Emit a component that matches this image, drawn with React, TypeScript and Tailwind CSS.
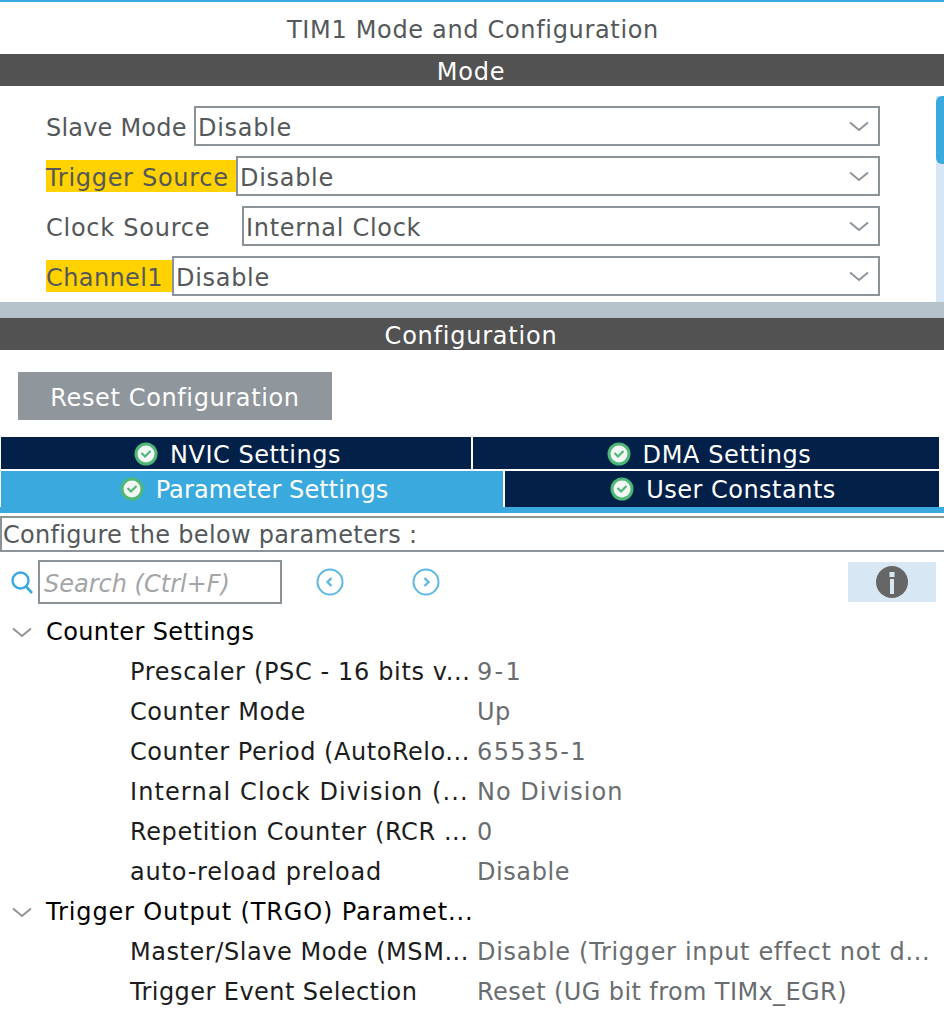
import { ReactNode } from 'react';

const font = "font-['DejaVu_Sans',sans-serif]";

interface ModeRowProps {
  label: string;
  value: string;
  /** Label column width, the select starts right after it */
  labelClass: string;
  trackClass: string;
  warn?: boolean;
}

function CheckBadge() {
  return (
    <svg width="24" height="24" viewBox="0 0 24 24" className="shrink-0">
      <circle cx="12" cy="12" r="11.5" fill="#4fb878" />
      <circle cx="12" cy="12" r="8.5" fill="#f2f7f3" />
      <path d="M7.5 11 L11 14.5 L16.5 9" fill="none" stroke="#4fb878" strokeWidth="2.2" />
    </svg>
  );
}

function Chevron({ color = '#8e9498' }: { color?: string }) {
  return (
    <svg width="20" height="11" viewBox="0 0 20 11" className="shrink-0">
      <path d="M1 1.5 L10 9 L19 1.5" fill="none" stroke={color} strokeWidth="2" />
    </svg>
  );
}

function ModeRow({ label, value, labelClass, trackClass, warn }: ModeRowProps) {
  return (
    <div className="flex h-10 items-center">
      <div className={`${labelClass} shrink-0`}>
        <span className={`flex h-8 items-center whitespace-nowrap pt-[4px] text-[#55585a] ${trackClass} ${warn ? 'bg-[#ffd200]' : ''}`}>
          {label}
        </span>
      </div>
      <div className="flex h-10 flex-1 items-center justify-between border-2 border-[#8b9399] pl-[2px] pr-[9px] text-[#55585a]">
        <span className="pt-[4px] tracking-[0.7px]">{value}</span>
        <Chevron />
      </div>
    </div>
  );
}

function SectionBar({ children }: { children: ReactNode }) {
  return (
    <div className="flex h-8 items-center justify-center bg-[#515251] pr-[2px] pt-[4px] tracking-[0.77px] text-white">{children}</div>
  );
}

function Tab({ label, className, textClass }: { label: string; className: string; textClass: string }) {
  return (
    <div className={`flex items-center justify-center gap-[12px] text-white ${className}`}>
      <CheckBadge />
      <span className={`pt-[2px] ${textClass}`}>{label}</span>
    </div>
  );
}

function GroupHeader({ label, trackClass }: { label: string; trackClass: string }) {
  return (
    <div className="flex h-10 items-center pl-[12px] pt-[2px] text-black">
      <Chevron color="#8e9498" />
      <span className={`ml-[14px] whitespace-nowrap ${trackClass}`}>{label}</span>
    </div>
  );
}

function ParamRow({ name, value, nameClass, valueClass }: { name: string; value: string; nameClass: string; valueClass: string }) {
  return (
    <div className="flex h-10 items-center pl-[130px] pt-[2px]">
      <span className={`w-[347px] shrink-0 whitespace-nowrap text-[#1c1c1c] ${nameClass}`}>{name}</span>
      <span className={`whitespace-nowrap text-[#6a6d70] ${valueClass}`}>{value}</span>
    </div>
  );
}

export default function App() {
  return (
    <div className={`${font} h-[1024px] w-[944px] overflow-hidden bg-white text-[24px] leading-none`}>
      <div className="h-[2px] bg-[#3aaade]" />
      <div className="flex h-[52px] items-center justify-center pl-[2px] pt-[4px] tracking-[0.67px] text-[#55585a]">TIM1 Mode and Configuration</div>
      <SectionBar>Mode</SectionBar>

      {/* Mode selects with the scrollbar on the right */}
      <div className="flex h-[216px] pl-[46px]">
        <div className="flex w-[834px] flex-col gap-[10px] pt-[20px]">
          <ModeRow label="Slave Mode" value="Disable" labelClass="w-[148px]" trackClass="tracking-[0.2px]" />
          <ModeRow label="Trigger Source" value="Disable" labelClass="w-[190px]" trackClass="tracking-[0.7px]" warn />
          <ModeRow label="Clock Source" value="Internal Clock" labelClass="w-[196px]" trackClass="tracking-[0.75px]" />
          <ModeRow label="Channel1" value="Disable" labelClass="w-[126px]" trackClass="tracking-[0.4px]" warn />
        </div>
        <div className="ml-auto mt-[10px] w-[8px] bg-[#d6e6f4]">
          <div className="h-[68px] rounded-tl-[6px] rounded-bl-[6px] bg-[#3aaade]" />
        </div>
      </div>
      <div className="h-4 bg-[#b7c3ca]" />
      <SectionBar>Configuration</SectionBar>

      <div className="px-[18px] pt-[22px]">
        <div className="flex h-12 w-[314px] items-center justify-center bg-[#8f969c] pt-[4px] tracking-[0.63px] text-white">Reset Configuration</div>
      </div>

      {/* Settings tabs */}
      <div className="mt-[17px] flex h-8 gap-[2px] pl-[1px] pr-[5px]">
        <Tab label="NVIC Settings" className="w-[470px] bg-[#032049] pl-[3px] pt-[2px]" textClass="tracking-[0.5px]" />
        <Tab label="DMA Settings" className="flex-1 bg-[#032049] pl-[6px] pt-[2px]" textClass="tracking-[0.6px]" />
      </div>
      <div className="mt-[2px] flex h-9 gap-[2px] pl-[1px] pr-[5px]">
        <Tab label="Parameter Settings" className="w-[502px] bg-[#3aaade] pl-[4px]" textClass="tracking-[0.1px]" />
        <Tab label="User Constants" className="flex-1 bg-[#032049] pl-[2px]" textClass="tracking-[0.5px]" />
      </div>
      <div className="h-[6px] bg-[#3aaade]" />

      <div className="mt-[3px] flex h-9 items-center border-y-2 border-l-2 border-[#8b9399] pl-[1px] pt-[2px] tracking-[0.31px] text-[#55585a]">
        Configure the below parameters :
      </div>

      {/* Search row */}
      <div className="flex h-[59px] items-start pt-[8px]">
        <svg width="24" height="26" viewBox="0 0 24 26" className="ml-[10px] mt-[10px] shrink-0">
          <circle cx="10.5" cy="10.5" r="8" fill="none" stroke="#3aaade" strokeWidth="2.4" />
          <path d="M16 16.5 L22 23" stroke="#3aaade" strokeWidth="2.6" />
        </svg>
        <div className="ml-[4px] flex h-11 w-[244px] items-center border-2 border-[#8b9399] pl-[4px] pt-[4px] italic text-[#a3a6a8]">
          Search (Ctrl+F)
        </div>
        <svg width="28" height="28" viewBox="0 0 28 28" className="ml-[34px] mt-[8px] shrink-0">
          <circle cx="14" cy="14" r="12.5" fill="none" stroke="#5cb8e4" strokeWidth="2" />
          <path d="M15.5 10 L11.5 14 L15.5 18" fill="none" stroke="#5cb8e4" strokeWidth="2.4" />
        </svg>
        <svg width="28" height="28" viewBox="0 0 28 28" className="ml-[68px] mt-[8px] shrink-0">
          <circle cx="14" cy="14" r="12.5" fill="none" stroke="#5cb8e4" strokeWidth="2" />
          <path d="M12.5 10 L16.5 14 L12.5 18" fill="none" stroke="#5cb8e4" strokeWidth="2.4" />
        </svg>
        <div className="ml-[408px] mt-[2px] flex h-10 w-[88px] items-center justify-center bg-[#d8e7f4]">
          <svg width="32" height="32" viewBox="0 0 32 32">
            <circle cx="16" cy="16" r="16" fill="#666666" />
            <rect x="13.5" y="6" width="5" height="5" fill="#d8e7f4" />
            <rect x="14" y="13" width="4" height="15" fill="#d8e7f4" />
          </svg>
        </div>
      </div>

      <GroupHeader label="Counter Settings" trackClass="tracking-[0.4px]" />
      <ParamRow name="Prescaler (PSC - 16 bits v..." value="9-1" nameClass="tracking-[0.64px]" valueClass="tracking-[2.3px]" />
      <ParamRow name="Counter Mode" value="Up" nameClass="tracking-[0.58px]" valueClass="tracking-[0.5px]" />
      <ParamRow name="Counter Period (AutoRelo..." value="65535-1" nameClass="tracking-[0.54px]" valueClass="tracking-[1.4px]" />
      <ParamRow name="Internal Clock Division (..." value="No Division" nameClass="tracking-[1.1px]" valueClass="tracking-[1px]" />
      <ParamRow name="Repetition Counter (RCR ..." value="0" nameClass="tracking-[0.6px]" valueClass="tracking-[0.5px]" />
      <ParamRow name="auto-reload preload" value="Disable" nameClass="tracking-[0.8px]" valueClass="tracking-[0.57px]" />
      <GroupHeader label="Trigger Output (TRGO) Paramet..." trackClass="tracking-[0.87px]" />
      <ParamRow name="Master/Slave Mode (MSM..." value="Disable (Trigger input effect not d..." nameClass="tracking-[0.55px]" valueClass="tracking-[0.68px]" />
      <ParamRow name="Trigger Event Selection" value="Reset (UG bit from TIMx_EGR)" nameClass="tracking-[0.43px]" valueClass="tracking-[0.4px]" />
    </div>
  );
}
